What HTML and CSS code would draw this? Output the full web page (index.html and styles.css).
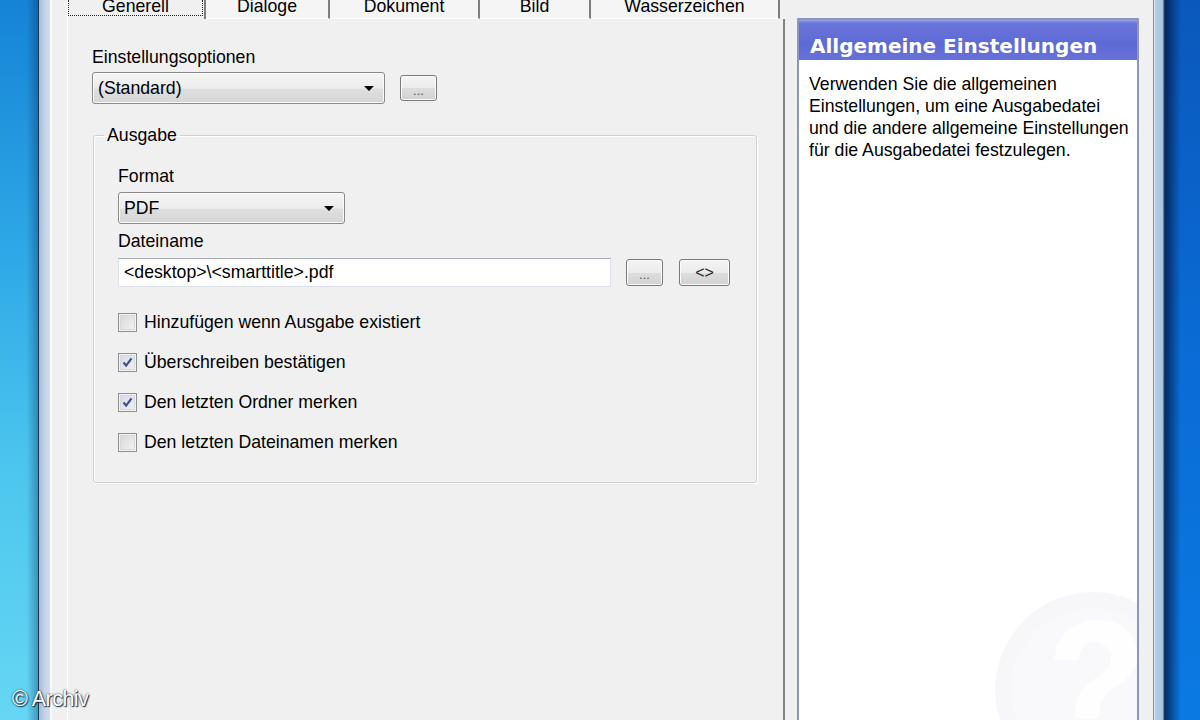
FILE: index.html
```html
<!DOCTYPE html>
<html lang="de">
<head>
    <meta charset="UTF-8">
    <title>Einstellungen</title>
    <link rel="stylesheet" href="styles.css">
</head>
<body>
<div class="screen">
    <div class="desk desk-left"></div>

    <div class="window">
        <div class="frame frame-left"></div>

        <div class="dialog">
            <div class="tabs-col">
                <div class="tab-strip">
                    <div class="tab tab-generell active"><span class="focus">Generell</span></div>
                    <div class="tab tab-dialoge">Dialoge</div>
                    <div class="tab tab-dokument">Dokument</div>
                    <div class="tab tab-bild">Bild</div>
                    <div class="tab tab-wz">Wasserzeichen</div>
                </div>

                <div class="tab-panel">
                    <div class="field-label">Einstellungsoptionen</div>
                    <div class="row">
                        <div class="combo combo-options">(Standard)<span class="arrow"></span></div>
                        <div class="btn btn-dots">...</div>
                    </div>

                    <fieldset class="group">
                        <legend>Ausgabe</legend>
                        <div class="group-body">
                            <div class="field-label">Format</div>
                            <div class="combo combo-format">PDF<span class="arrow"></span></div>

                            <div class="field-label label-file">Dateiname</div>
                            <div class="row row-file">
                                <div class="textbox">&lt;desktop&gt;\&lt;smarttitle&gt;.pdf</div>
                                <div class="btn btn-dots">...</div>
                                <div class="btn btn-tags">&lt;&gt;</div>
                            </div>

                            <div class="checks">
                                <div class="check-row"><span class="checkbox"></span>Hinzufügen wenn Ausgabe existiert</div>
                                <div class="check-row"><span class="checkbox checked"><svg viewBox="0 0 19 19"><path d="M5 9.5 L8 13 L14 5" fill="none" stroke="#3c4f86" stroke-width="2.4"/></svg></span>Überschreiben bestätigen</div>
                                <div class="check-row"><span class="checkbox checked"><svg viewBox="0 0 19 19"><path d="M5 9.5 L8 13 L14 5" fill="none" stroke="#3c4f86" stroke-width="2.4"/></svg></span>Den letzten Ordner merken</div>
                                <div class="check-row"><span class="checkbox"></span>Den letzten Dateinamen merken</div>
                            </div>
                        </div>
                    </fieldset>
                </div>
            </div>

            <div class="help">
                <div class="help-title">Allgemeine Einstellungen</div>
                <p class="help-text">Verwenden Sie die allgemeinen<br>Einstellungen, um eine Ausgabedatei<br>und die andere allgemeine Einstellungen<br>für die Ausgabedatei festzulegen.</p>
                <!-- faint help watermark in the corner -->
                <svg class="help-mark" viewBox="0 0 200 200">
                    <circle cx="100" cy="100" r="98" fill="#f7f7fa"/>
                    <circle cx="100" cy="100" r="82" fill="#f9f9fc"/>
                    <path d="M62 70 C62 40 90 28 108 30 C134 32 146 50 144 68 C142 86 126 94 116 102 C108 108 106 116 106 128 L82 128 C82 110 86 100 100 90 C112 82 118 76 118 68 C118 58 110 52 102 52 C92 52 86 60 86 70 Z" fill="#fefeff"/>
                    <rect x="82" y="140" width="24" height="22" fill="#fefeff"/>
                </svg>
            </div>
        </div>

        <div class="frame frame-right"></div>
    </div>

    <div class="desk desk-right"></div>

    <div class="credit">© Archiv</div>
</div>
</body>
</html>
```

FILE: styles.css
```css
html, body {
    margin: 0;
    padding: 0;
}

body {
    width: 1200px;
    height: 720px;
    overflow: hidden;
    font-family: "Liberation Sans", Arial, sans-serif;
    font-size: 17.7px;
    color: #000;
}

.screen {
    position: relative;
    display: flex;
    height: 720px;
}

/* Desktop strips left and right */
.desk-left {
    width: 38px;
    flex: none;
    background:
        linear-gradient(to right, rgba(0, 0, 0, 0) 70%, rgba(0, 40, 80, 0.35)),
        linear-gradient(#1583d6, #2ea8e6 35%, #4cc6ee 65%, #66d6f4);
}

.desk-right {
    flex: 1;
    background:
        linear-gradient(to right, rgba(0, 20, 60, 0.75), rgba(0, 20, 60, 0) 45%),
        linear-gradient(#0a58bc, #0a6cd6 50%, #0a7ae2);
}

/* Window */
.window {
    display: flex;
    width: 1127px;
    flex: none;
}

.frame-left {
    width: 14px;
    background: linear-gradient(to right, #1c3552 0, #1c3552 1px, #a6bcd6 1px, #c4d5e8 7px, #d0deee 12px, #fbfbfb 12px);
}

.frame-right {
    width: 12px;
    background: linear-gradient(to right, #8c8c8c 0, #8c8c8c 1px, #dde7f2 1px, #dde7f2 2px, #b6cfe8 2px, #a6c2e0 10px, #1d3a5c 11px);
}

.dialog {
    flex: 1;
    display: flex;
    gap: 12px;
    padding: 0 14px 0 15px;
    background: #f0f0f0;
}

/* Tabs */
.tabs-col {
    width: 718px;
    flex: none;
    display: flex;
    flex-direction: column;
}

.tab-strip {
    display: flex;
    height: 19px;
}

.tab {
    box-sizing: border-box;
    height: 19px;
    border-right: 2px solid #7e7e7e;
    border-bottom: 1px solid #fff;
    background: #f5f5f5;
    text-align: center;
    line-height: 13px;
    overflow: hidden;
}

.tab-generell { width: 139px; }
.tab-dialoge { width: 124px; }
.tab-dokument { width: 150px; }
.tab-bild { width: 111px; }
.tab-wz { width: 189px; }

.tab.active {
    background: #f0f0f0;
    border-bottom: none;
    border-left: 1px solid #fff;
}

.focus {
    display: block;
    box-sizing: border-box;
    height: 16px;
    margin: 0 1px 0 0;
    border: 1px dotted #222;
    border-top: none;
}

.tab-panel {
    flex: 1;
    box-sizing: border-box;
    border-left: 1px solid #fff;
    border-right: 2px solid #828282;
    padding: 27px 0 0 24px;
}

.field-label {
    line-height: 22px;
    margin-bottom: 4px;
}

.row {
    display: flex;
    align-items: center;
    gap: 15px;
}

/* Combo boxes and buttons */
.combo {
    position: relative;
    box-sizing: border-box;
    height: 32px;
    padding-left: 5px;
    line-height: 30px;
    border: 1px solid #8a8a8a;
    border-radius: 3px;
    background: linear-gradient(#f6f6f6, #ececec 50%, #dedede 55%, #d6d6d6);
    box-shadow: inset 0 0 0 1px #fafafa;
}

.combo-options { width: 293px; }
.combo-format { width: 227px; }

.arrow {
    position: absolute;
    right: 10px;
    top: 13px;
    width: 0;
    height: 0;
    border-left: 5px solid transparent;
    border-right: 5px solid transparent;
    border-top: 5px solid #000;
}

.btn {
    box-sizing: border-box;
    height: 26px;
    border: 1px solid #7a7a7a;
    border-radius: 3px;
    background: linear-gradient(#f4f4f4, #ebebeb 50%, #dddddd 52%, #d2d2d2);
    box-shadow: inset 0 0 0 1px #fbfbfb;
    text-align: center;
    font-size: 13px;
    color: #555;
}

.btn-dots {
    width: 37px;
    line-height: 30px;
}

.btn-tags {
    width: 51px;
    height: 27px;
    line-height: 25px;
    font-size: 16px;
    color: #222;
}

/* Group box */
.group {
    width: 664px;
    box-sizing: border-box;
    margin: 20px 0 0 1px;
    padding: 0;
    border: 1px solid #d2d2d2;
    border-radius: 3px;
    box-shadow: 1px 1px 0 #fff, inset 1px 1px 0 #fff;
}

.group legend {
    margin-left: 10px;
    padding: 0 3px;
    line-height: 22px;
}

.group-body {
    padding: 19px 24px 30px 24px;
}

.group-body .field-label {
    margin-bottom: 5px;
}

.group-body .label-file {
    margin-top: 6px;
    margin-bottom: 6px;
}

.row-file {
    gap: 0;
}

.textbox {
    box-sizing: border-box;
    width: 493px;
    height: 29px;
    padding-left: 5px;
    line-height: 27px;
    background: #fff;
    border: 1px solid #dde2ea;
    border-top-color: #a8abb2;
    margin-right: 15px;
}

.row-file .btn-dots {
    height: 27px;
    margin-right: 16px;
}

/* Check boxes */
.checks {
    display: flex;
    flex-direction: column;
    gap: 20px;
    margin-top: 25px;
}

.check-row {
    display: flex;
    align-items: center;
    gap: 7px;
    height: 20px;
    line-height: 20px;
}

.checkbox {
    box-sizing: border-box;
    width: 19px;
    height: 19px;
    border: 1px solid #8e8f8f;
    background: linear-gradient(135deg, #d6d6d6, #f4f4f4);
    box-shadow: inset 0 0 0 1px #f4f4f4, inset 0 0 0 2px #d8d8d8;
}

.checkbox.checked {
    background: linear-gradient(135deg, #d4d8e6, #f2f3f8);
}

.checkbox svg {
    display: block;
    width: 17px;
    height: 17px;
}

/* Help panel */
.help {
    position: relative;
    width: 342px;
    flex: none;
    box-sizing: border-box;
    margin-top: 18px;
    border: 2px solid #8e96ba;
    border-bottom: none;
    background: #fff;
    overflow: hidden;
}

.help-title {
    height: 28px;
    padding: 12px 0 0 11px;
    background: linear-gradient(#9aa2ec, #6a76dc 3px, #5e6ad4 60%, #6672d8);
    color: #fff;
    font-family: "DejaVu Sans", Verdana, sans-serif;
    font-weight: bold;
    font-size: 20px;
    line-height: 28px;
    white-space: nowrap;
}

.help-text {
    margin: 0;
    padding: 13px 10px 0 10px;
    line-height: 22px;
    white-space: nowrap;
}

.help-mark {
    position: absolute;
    left: 194px;
    top: 570px;
    width: 200px;
    height: 200px;
}

.credit {
    position: absolute;
    left: 12px;
    bottom: 8px;
    color: #fff;
    font-size: 21.5px;
    letter-spacing: -0.5px;
    text-shadow: 0 0 2px #123, 1px 1px 1px #234;
}
```
